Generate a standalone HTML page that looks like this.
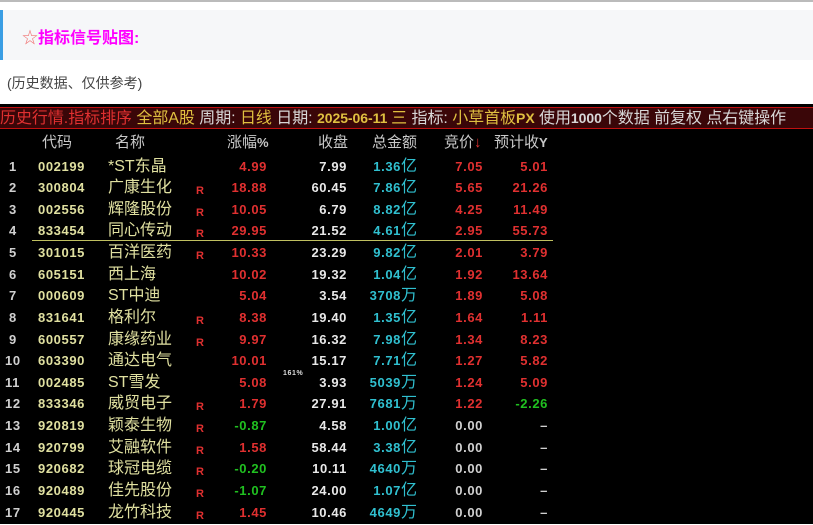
<!DOCTYPE html><html><head><meta charset="utf-8"><style>
body{margin:0;width:813px;height:524px;overflow:hidden;background:#fff;font-family:"Liberation Sans","Noto Sans CJK SC",sans-serif;position:relative}
.top{position:absolute;left:0;top:0;width:813px;height:2px;background:#bbb}
.box{position:absolute;left:0;top:10px;width:813px;height:50px;background:#f6f7f9;border-left:3px solid #3a9ee4;box-sizing:border-box}
.box span{position:absolute;left:19px;top:14px;font-size:16px;font-weight:bold;color:#f0f}
.note{position:absolute;left:7px;top:73px;font-size:14px;color:#444}
.blk{position:absolute;left:0;top:104px;width:813px;height:420px;background:#000}
.bar{position:absolute;left:0;top:107px;width:813px;height:22px;background:#3a0608;border-top:1px solid #c01010;border-bottom:1px solid #c01010;box-sizing:border-box;font-size:16px;line-height:20px;white-space:nowrap;color:#d8d8d8;letter-spacing:-0.05px}
.bar b{font-weight:normal}
.r{color:#e03030}.y{color:#e0c040}.w{color:#e0e0e0}
.c{position:absolute;font-size:13px;font-weight:bold;line-height:18px;white-space:nowrap;letter-spacing:0.6px}
.hd{position:absolute;top:134px;font-size:15px;color:#c8c8c8;line-height:18px;white-space:nowrap}
.line{position:absolute;left:32px;top:240px;width:521px;height:1px;background:#c0c060}
</style></head><body>
<div class="top"></div>
<div class="box"><span><span style="position:static;color:#f07070;font-weight:normal">☆</span>指标信号贴图:</span></div>
<div class="note">(历史数据、仅供参考)</div>
<div class="blk"></div>
<div class="bar"><span class="r">历史行情.指标排序</span> <span class="y">全部A股</span> 周期: <span class="y">日线</span> 日期: <span class="y" style="font-weight:bold;font-size:14px">2025-06-11 </span><span class="y">三</span> 指标: <span class="y">小草首板<b style="font-weight:bold;font-size:14px">PX</b></span> 使用<b style="font-weight:bold;font-size:14px">1000</b>个数据 前复权 点右键操作</div>
<div class="hd" style="left:42px">代码</div>
<div class="hd" style="left:115px">名称</div>
<div class="hd" style="left:227px">涨幅<b style="font-size:13px">%</b></div>
<div class="hd" style="left:318px">收盘</div>
<div class="hd" style="left:372px">总金额</div>
<div class="hd" style="left:444px">竞价<span class="r">↓</span></div>
<div class="hd" style="left:494px">预计收<b style="font-size:13px">Y</b></div>
<div class="line"></div>
<div class="c" style="left:283px;top:370px;font-size:7px;color:#ddd;line-height:8px">161%</div>
<div id="rows"></div>
<script>
var d=[["002199","*ST东晶",0,"4.99","7.99","1.36亿","7.05","5.01"],
["300804","广康生化",1,"18.88","60.45","7.86亿","5.65","21.26"],
["002556","辉隆股份",1,"10.05","6.79","8.82亿","4.25","11.49"],
["833454","同心传动",1,"29.95","21.52","4.61亿","2.95","55.73"],
["301015","百洋医药",1,"10.33","23.29","9.82亿","2.01","3.79"],
["605151","西上海",0,"10.02","19.32","1.04亿","1.92","13.64"],
["000609","ST中迪",0,"5.04","3.54","3708万","1.89","5.08"],
["831641","格利尔",1,"8.38","19.40","1.35亿","1.64","1.11"],
["600557","康缘药业",1,"9.97","16.32","7.98亿","1.34","8.23"],
["603390","通达电气",0,"10.01","15.17","7.71亿","1.27","5.82"],
["002485","ST雪发",0,"5.08","3.93","5039万","1.24","5.09"],
["833346","威贸电子",1,"1.79","27.91","7681万","1.22","-2.26"],
["920819","颖泰生物",1,"-0.87","4.58","1.00亿","0.00","—"],
["920799","艾融软件",1,"1.58","58.44","3.38亿","0.00","—"],
["920682","球冠电缆",1,"-0.20","10.11","4640万","0.00","—"],
["920489","佳先股份",1,"-1.07","24.00","1.07亿","0.00","—"],
["920445","龙竹科技",1,"1.45","10.46","4649万","0.00","—"]];
var h="";
d.forEach(function(r,i){var t=Math.round(157.5+i*21.625);
function c(x,txt,col,ex,right){h+='<div class="c" style="'+(right?'right:'+(813-x):'left:'+x)+'px;top:'+t+'px;color:'+col+';'+(ex||'')+'">'+txt+'</div>';}
c(i<9?9:5,i+1,"#d0d0d0");
c(38,r[0],"#e0e0a0");
c(108,r[1],"#e0e0a0","font-weight:normal;font-size:16px;letter-spacing:0");
if(r[2])c(196,"R","#e03030","font-size:11px;top:"+(t+3)+"px");
var g=r[3][0]=="-";c(267,r[3],g?"#20c020":"#e03030","",1);
c(347,r[4],"#e8e8e8","",1);
var u=r[5].slice(-1),n=r[5].slice(0,-1);c(417,n+'<span style="font-weight:normal;font-size:16px;letter-spacing:0">'+u+'</span>',"#30c0d0","",1);
c(483,r[6],r[6]=="0.00"?"#d0d0d0":"#e03030","",1);
var p=r[7];c(548,p=="—"?"–":p,p=="—"?"#d0d0d0":(p[0]=="-"?"#20c020":"#e03030"),"",1);
});
document.getElementById("rows").innerHTML=h;
</script>
</body></html>
